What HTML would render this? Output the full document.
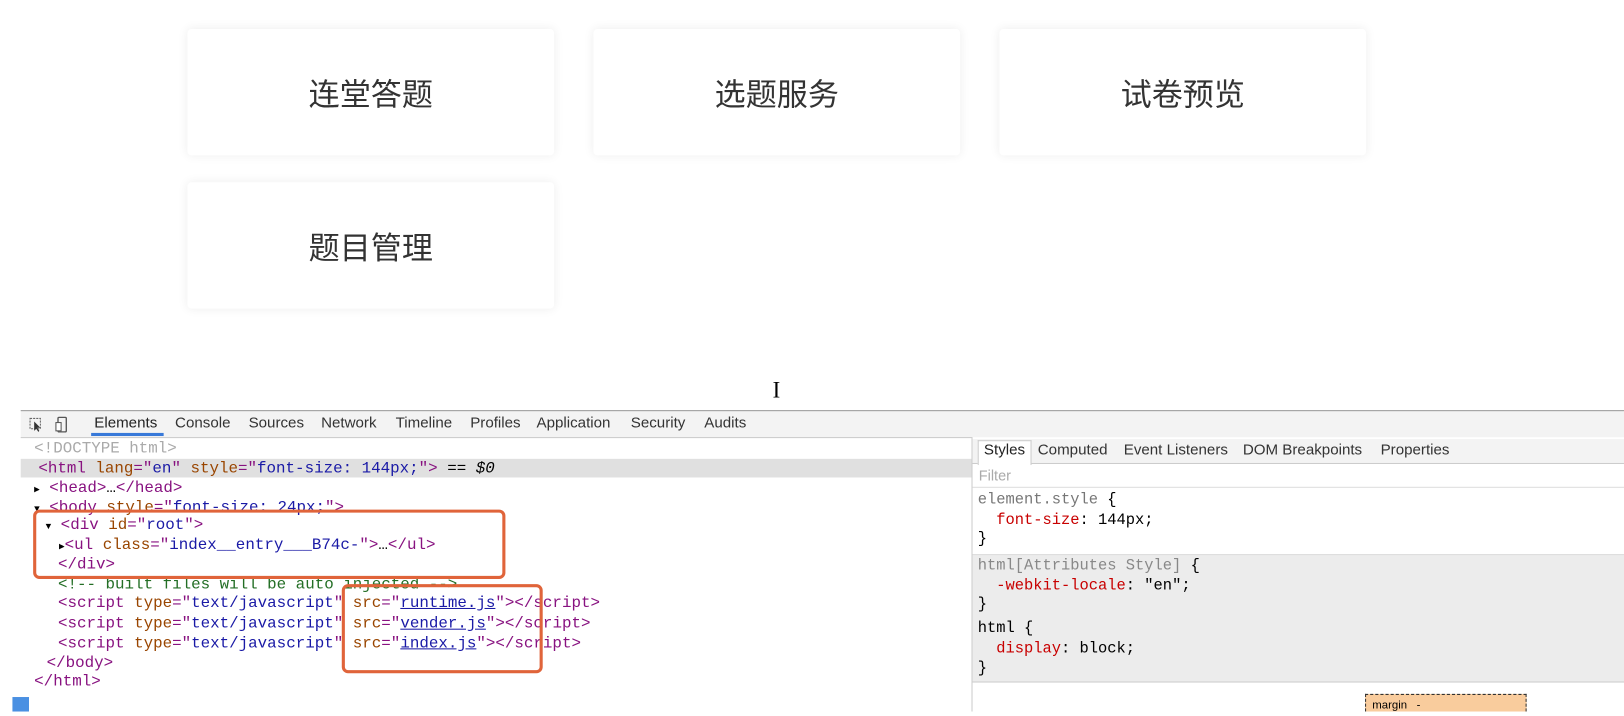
<!DOCTYPE html>
<html><head><meta charset="utf-8"><style>
html,body{margin:0;padding:0;background:#fff;overflow:hidden;width:1624px;height:712px}
#w{position:absolute;left:0;top:0;width:1568px;height:687px;transform:scale(1.0357);transform-origin:0 0;font-family:"Liberation Sans","Noto Sans CJK SC",sans-serif}
.card{position:absolute;width:354px;height:122px;background:#fff;border-radius:4px;box-shadow:0 0 10px rgba(0,0,0,.07);display:flex;align-items:center;justify-content:center;font-size:30px;color:#333;font-family:"Noto Sans CJK SC","WenQuanYi Zen Hei",sans-serif;font-weight:400}
.abs{position:absolute}
.mono{font-family:"Liberation Mono","DejaVu Sans Mono",monospace;font-size:15.3px;white-space:pre}
.mono.r{font-size:14.9px}
.ln{position:absolute;height:19px;line-height:19px}
.t{color:#881280}.a{color:#994500}.v{color:#1a1aa6}.g{color:#aaa}.c{color:#236e25}.k{color:#c80000}.lnk{color:#1a1aa6;text-decoration:underline}
.tab{position:absolute;top:0;height:25px;line-height:25px;font-size:14.6px;color:#333;white-space:nowrap}
</style></head><body><div id="w">
<div class="card" style="left:181px;top:28px">连堂答题</div>
<div class="card" style="left:573px;top:28px">选题服务</div>
<div class="card" style="left:965px;top:28px">试卷预览</div>
<div class="card" style="left:181px;top:176px">题目管理</div>
<div class="abs" style="left:746px;top:364px;font-size:22px;color:#000;font-family:'Liberation Serif',serif">I</div>

<div class="abs" style="left:20px;top:396px;width:1548px;height:25px;background:#f3f3f3;border-top:1px solid #999;border-bottom:1px solid #ccc"></div>
<svg class="abs" style="left:28px;top:402px" width="44" height="16"><rect x="1" y="2" width="10" height="10" fill="none" stroke="#666" stroke-dasharray="2,1"/><path d="M5 5 L5 14 L7 12 L9 15 L10 14 L8 11 L11 11 Z" fill="#333"/><rect x="28" y="1" width="8" height="14" rx="1" fill="none" stroke="#555" stroke-width="1.3"/><rect x="26" y="6" width="5" height="8" fill="#fff" stroke="#555"/></svg>
<div style="position:absolute;left:0;top:397px">
<span class="tab" style="left:91px;color:#222">Elements</span>
<span class="tab" style="left:169px">Console</span>
<span class="tab" style="left:240px">Sources</span>
<span class="tab" style="left:310px">Network</span>
<span class="tab" style="left:382px">Timeline</span>
<span class="tab" style="left:454px">Profiles</span>
<span class="tab" style="left:518px">Application</span>
<span class="tab" style="left:609px">Security</span>
<span class="tab" style="left:680px">Audits</span>
</div>
<div class="abs" style="left:88px;top:418px;width:70px;height:3px;background:#3879d9"></div>

<div class="abs" style="left:20px;top:443px;width:918px;height:18px;background:#e0e0e0"></div>
<div class="mono">
<div class="ln g" style="left:33px;top:424px">&lt;!DOCTYPE html&gt;</div>
<div class="ln" style="left:37px;top:443px"><span class="t">&lt;html</span> <span class="a">lang</span><span class="t">="</span><span class="v">en</span><span class="t">"</span> <span class="a">style</span><span class="t">="</span><span class="v">font-size: 144px;</span><span class="t">"&gt;</span> == <i>$0</i></div>
<div class="ln" style="left:33px;top:462px"><span style="font-size:9px">▶</span> <span class="t">&lt;head&gt;</span>…<span class="t">&lt;/head&gt;</span></div>
<div class="ln" style="left:33px;top:481px"><span style="font-size:9px">▼</span> <span class="t">&lt;body</span> <span class="a">style</span><span class="t">="</span><span class="v">font-size: 24px;</span><span class="t">"&gt;</span></div>
<div class="ln" style="left:44px;top:498px"><span style="font-size:9px">▼</span> <span class="t">&lt;div</span> <span class="a">id</span><span class="t">="</span><span class="v">root</span><span class="t">"&gt;</span></div>
<div class="ln" style="left:57px;top:517px"><span style="font-size:9px">▶</span><span class="t">&lt;ul</span> <span class="a">class</span><span class="t">="</span><span class="v">index__entry___B74c-</span><span class="t">"&gt;</span>…<span class="t">&lt;/ul&gt;</span></div>
<div class="ln t" style="left:56px;top:536px">&lt;/div&gt;</div>
<div class="ln c" style="left:56px;top:555px">&lt;!-- built files will be auto injected --&gt;</div>
<div class="ln" style="left:56px;top:573px"><span class="t">&lt;script</span> <span class="a">type</span><span class="t">="</span><span class="v">text/javascript</span><span class="t">"</span> <span class="a">src</span><span class="t">="</span><span class="lnk">runtime.js</span><span class="t">"&gt;&lt;/script&gt;</span></div>
<div class="ln" style="left:56px;top:593px"><span class="t">&lt;script</span> <span class="a">type</span><span class="t">="</span><span class="v">text/javascript</span><span class="t">"</span> <span class="a">src</span><span class="t">="</span><span class="lnk">vender.js</span><span class="t">"&gt;&lt;/script&gt;</span></div>
<div class="ln" style="left:56px;top:612px"><span class="t">&lt;script</span> <span class="a">type</span><span class="t">="</span><span class="v">text/javascript</span><span class="t">"</span> <span class="a">src</span><span class="t">="</span><span class="lnk">index.js</span><span class="t">"&gt;&lt;/script&gt;</span></div>
<div class="ln t" style="left:45px;top:631px">&lt;/body&gt;</div>
<div class="ln t" style="left:33px;top:649px">&lt;/html&gt;</div>
</div>
<div class="abs" style="left:32px;top:492px;width:450px;height:61px;border:3px solid #e0643a;border-radius:6px"></div>
<div class="abs" style="left:330px;top:564px;width:188px;height:80px;border:3px solid #e0643a;border-radius:6px"></div>
<div class="abs" style="left:12px;top:673px;width:16px;height:14px;background:#4a90e2"></div>

<div class="abs" style="left:938px;top:422px;width:630px;height:265px;border-left:1px solid #ccc;background:#fff"></div>
<div class="abs" style="left:939px;top:424px;width:629px;height:23px;background:#f3f3f3;border-bottom:1px solid #ccc"></div>
<div class="abs" style="left:944px;top:425px;width:50px;height:23px;background:#fff;border:1px solid #ccc;border-bottom:none"></div>
<div style="position:absolute;left:0;top:424px">
<span class="tab" style="left:950px;height:23px;line-height:23px;color:#222">Styles</span>
<span class="tab" style="left:1002px;height:23px;line-height:23px">Computed</span>
<span class="tab" style="left:1085px;height:23px;line-height:23px">Event Listeners</span>
<span class="tab" style="left:1200px;height:23px;line-height:23px">DOM Breakpoints</span>
<span class="tab" style="left:1333px;height:23px;line-height:23px">Properties</span>
</div>
<div class="abs" style="left:945px;top:451px;font-size:14px;color:#aaa">Filter</div>
<div class="abs" style="left:939px;top:470px;width:629px;height:1px;background:#ddd"></div>
<div class="abs" style="left:939px;top:535px;width:629px;height:122px;background:#ececec;border-top:1px solid #ddd;border-bottom:1px solid #ccc"></div>
<div class="mono r">
<div class="ln" style="left:944px;top:474px"><span style="color:#777">element.style</span> {</div>
<div class="ln" style="left:944px;top:494px">  <span class="k">font-size</span>: 144px;</div>
<div class="ln" style="left:944px;top:512px">}</div>
<div class="ln" style="left:944px;top:538px"><span style="color:#888">html[Attributes Style]</span> {</div>
<div class="ln" style="left:944px;top:557px">  <span class="k">-webkit-locale</span>: "en";</div>
<div class="ln" style="left:944px;top:575px">}</div>
<div class="ln" style="left:944px;top:598px">html {</div>
<div class="ln" style="left:944px;top:618px">  <span class="k">display</span>: block;</div>
<div class="ln" style="left:944px;top:637px">}</div>
</div>
<div class="abs" style="left:1318px;top:670px;width:156px;height:17px;background:#f9cc9d;border:1px dashed #333;border-bottom:none;font-size:11px;line-height:20px;padding-left:6px;box-sizing:border-box">margin &nbsp; -</div>
</div></body></html>
